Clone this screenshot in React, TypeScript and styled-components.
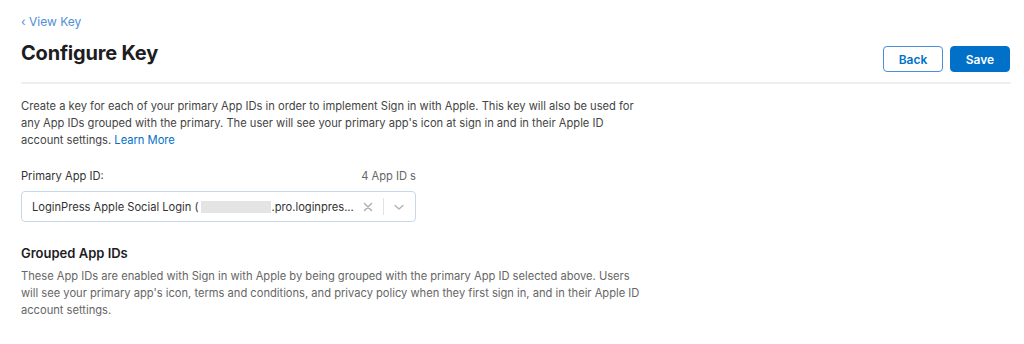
import React from "react";
import styled, { createGlobalStyle } from "styled-components";

const Global = createGlobalStyle`
  html, body { margin: 0; padding: 0; background: #fff; }
  body { font-family: Inter, "Noto Sans", "Liberation Sans", sans-serif; color: #333; }
`;

const Page = styled.div`
  padding: 13px 13px 0 21px;
`;

const Breadcrumb = styled.a`
  display: block;
  font-size: 12px;
  line-height: 17px;
  color: #4f8fd6;
  text-decoration: none;
`;

const HeaderRow = styled.div`
  display: flex;
  justify-content: space-between;
  align-items: flex-start;
  margin-top: 11px;
  padding-bottom: 10px;
  border-bottom: 2px solid #efefef;
`;

const Title = styled.h1`
  margin: 0;
  font-size: 20px;
  line-height: 24px;
  font-weight: 700;
  color: #1d1d1f;
  letter-spacing: -0.2px;
`;

const Actions = styled.div`
  display: flex;
  gap: 7px;
  margin-top: 5px;
  margin-right: 1px;
`;

const Button = styled.button<{ $primary?: boolean }>`
  box-sizing: border-box;
  width: 60px;
  height: 26px;
  border-radius: 4px;
  font-family: inherit;
  font-size: 12px;
  font-weight: 600;
  cursor: pointer;
  border: 1px solid ${(p) => (p.$primary ? "#0070c9" : "#4a90d9")};
  background: ${(p) => (p.$primary ? "#0070c9" : "#fff")};
  color: ${(p) => (p.$primary ? "#fff" : "#0070c9")};
`;

const Paragraph = styled.p<{ $top: number; $muted?: boolean }>`
  margin: ${(p) => p.$top}px 0 0;
  font-size: 11.15px;
  line-height: 17px;
  white-space: nowrap;
  color: ${(p) => (p.$muted ? "#666" : "#444")};
`;

const Link = styled.a`
  color: #0070c9;
  text-decoration: none;
`;

const Field = styled.div`
  width: 395px;
  margin-top: 19px;
`;

const LabelRow = styled.div`
  display: flex;
  justify-content: space-between;
  font-size: 11.15px;
  line-height: 17px;
`;

const Label = styled.label`
  color: #333;
`;

const Count = styled.span`
  color: #666;
`;

const Select = styled.div`
  box-sizing: border-box;
  margin-top: 6px;
  height: 31px;
  border: 1px solid #c6d8ec;
  border-radius: 4px;
  display: flex;
  align-items: center;
  padding: 0 9px 0 10px;
  font-size: 11.15px;
  color: #333;
`;

const Value = styled.div`
  flex: 1;
  display: flex;
  align-items: center;
  white-space: nowrap;
  overflow: hidden;
`;

const Redacted = styled.span`
  display: inline-block;
  width: 70px;
  height: 12px;
  background: #e4e4e4;
  margin: 0 1px 0 2px;
`;

const Indicators = styled.div`
  display: flex;
  align-items: center;
  gap: 8px;
`;

const Separator = styled.span`
  width: 1px;
  height: 17px;
  background: #e2e2e2;
`;

const Heading = styled.h2`
  margin: 23px 0 0;
  font-size: 13px;
  line-height: 17px;
  font-weight: 600;
  color: #1d1d1f;
`;

export default function App() {
  return (
    <>
      <Global />
      <Page>
        <Breadcrumb href="#">‹ View Key</Breadcrumb>
        <HeaderRow>
          <Title>Configure Key</Title>
          <Actions>
            <Button>Back</Button>
            <Button $primary>Save</Button>
          </Actions>
        </HeaderRow>
        <Paragraph $top={14}>
          Create a key for each of your primary App IDs in order to implement Sign in with Apple. This key will also be used for
          <br />
          any App IDs grouped with the primary. The user will see your primary app's icon at sign in and in their Apple ID
          <br />
          account settings. <Link href="#">Learn More</Link>
        </Paragraph>
        <Field>
          <LabelRow>
            <Label>Primary App ID:</Label>
            <Count>4 App ID s</Count>
          </LabelRow>
          <Select>
            <Value>
              LoginPress Apple Social Login (<Redacted />.pro.loginpres...
            </Value>
            <Indicators>
              <svg width="14" height="14" viewBox="0 0 14 14">
                <path d="M3.5 3.5 L10.5 10.5 M10.5 3.5 L3.5 10.5" stroke="#b3b3b3" strokeWidth="1.6" strokeLinecap="round" />
              </svg>
              <Separator />
              <svg width="14" height="14" viewBox="0 0 14 14">
                <path d="M3 5.5 L7 9 L11 5.5" fill="none" stroke="#b3b3b3" strokeWidth="1.4" strokeLinecap="round" strokeLinejoin="round" />
              </svg>
            </Indicators>
          </Select>
        </Field>
        <Heading>Grouped App IDs</Heading>
        <Paragraph $top={6} $muted>
          These App IDs are enabled with Sign in with Apple by being grouped with the primary App ID selected above. Users
          <br />
          will see your primary app's icon, terms and conditions, and privacy policy when they first sign in, and in their Apple ID
          <br />
          account settings.
        </Paragraph>
      </Page>
    </>
  );
}
